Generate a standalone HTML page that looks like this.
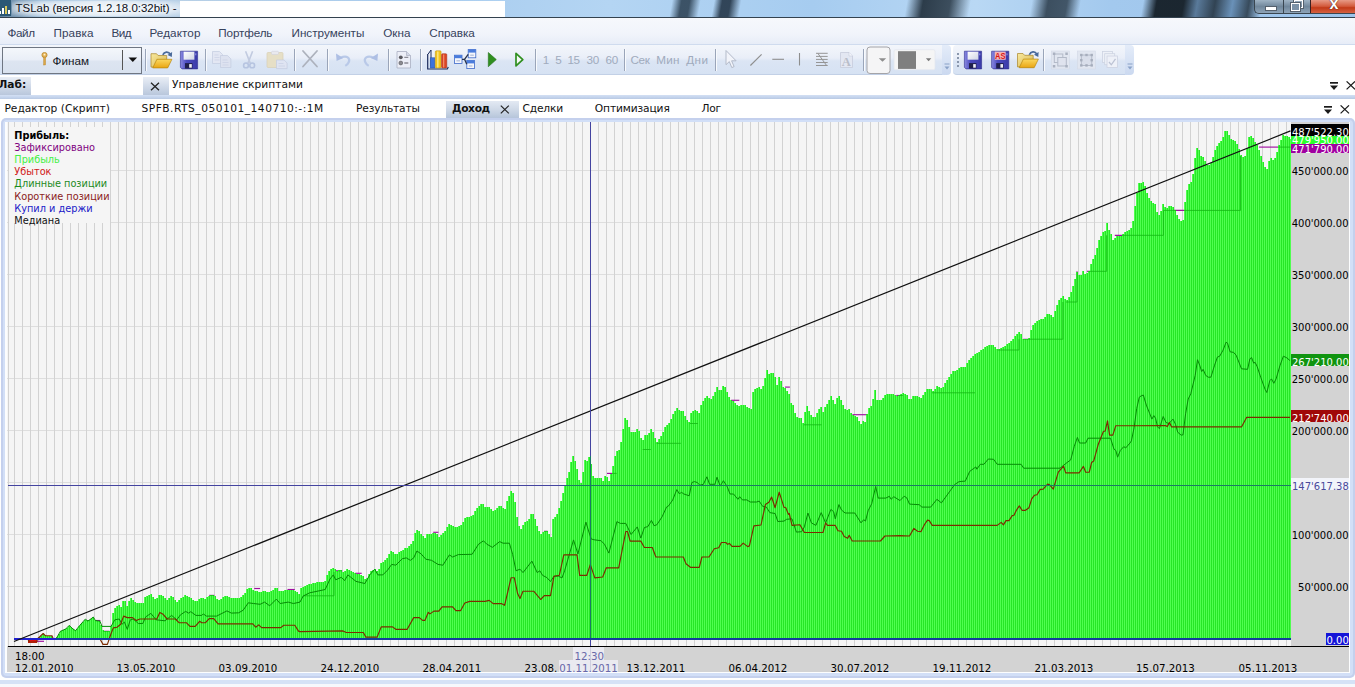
<!DOCTYPE html><html><head><meta charset="utf-8"><title>TSLab</title><style>
html,body{margin:0;padding:0}
body{width:1355px;height:687px;overflow:hidden;position:relative;background:#fff;font-family:"Liberation Sans",sans-serif;}
.abs{position:absolute;white-space:nowrap}
.ui{font-family:"Liberation Sans",sans-serif;font-size:11.7px;color:#36425c}
.tab{font-family:"DejaVu Sans",sans-serif;font-size:10.67px;color:#111;line-height:14px}
.ax{font-family:"DejaVu Sans",sans-serif;font-size:10px;color:#000;line-height:12px}
.lg{font-family:"DejaVu Sans",sans-serif;font-size:9.75px;line-height:12px}
.tag{font-family:"DejaVu Sans",sans-serif;font-size:10px;color:#fff;line-height:18px;height:12px;overflow:hidden;left:1291px;width:58px;text-align:left;padding-left:1px;box-sizing:border-box}
.dis{color:#a0abbd}
.sep{position:absolute;top:48.5px;width:1px;height:22.5px;background:#9aa5b9;box-shadow:1px 0 0 #f8fafd}
</style></head><body>
<div class="abs" id="titlebar" style="left:0;top:0;width:1355px;height:18px;background:
linear-gradient(100deg, rgba(0,0,0,0) 0, rgba(0,0,0,0) 49.5%, rgba(40,60,78,.85) 50.2%, rgba(40,60,78,.85) 50.8%, rgba(0,0,0,0) 51.6%, rgba(0,0,0,0) 52.6%, rgba(36,54,72,.9) 53.2%, rgba(36,54,72,.9) 53.8%, rgba(0,0,0,0) 54.6%,
 rgba(0,0,0,0) 66.8%, rgba(30,44,56,.9) 68%, rgba(30,44,56,.8) 70%, rgba(0,0,0,0) 71.5%,
 rgba(0,0,0,0) 76%, rgba(40,56,70,.85) 77.2%, rgba(40,56,70,.8) 78.6%, rgba(0,0,0,0) 79.6%,
 rgba(0,0,0,0) 84.2%, rgba(20,30,38,.95) 85.2%, rgba(20,30,38,.95) 87.2%, rgba(60,90,120,.7) 88.2%, rgba(30,44,56,.85) 89.5%, rgba(70,110,150,.6) 90.8%, rgba(30,44,56,.8) 92%, rgba(0,0,0,0) 93%),
linear-gradient(90deg,#5d7f9c 0,#a9c6df 3%,#c9dced 8%,#b6cfe6 14%,#a7cbee 30%,#b4d5f3 45%,#a6ccf0 60%,#b9d8f4 72%,#a3c9ee 82%,#9cc3ea 100%);"></div>
<div class="abs" style="left:0;top:17.4px;width:1355px;height:1.1px;background:#33424f"></div>
<div class="abs" style="left:0;top:0;width:10.7px;height:15.5px;background:#2b5875"></div>
<div class="abs" style="left:0px;top:11px;width:1.1px;height:2.7px;background:#fff"></div><div class="abs" style="left:2.2px;top:8.1px;width:1.8px;height:5.6px;background:#fff"></div><div class="abs" style="left:4.8px;top:5.9px;width:2.6px;height:7.8px;background:#d9c95a"></div><div class="abs" style="left:8.1px;top:10px;width:1.9px;height:3.7px;background:#fff"></div>
<div class="abs" style="left:12px;top:1px;width:172px;height:15px;background:radial-gradient(ellipse at center, rgba(255,255,255,.75) 0, rgba(255,255,255,.55) 60%, rgba(255,255,255,0) 100%)"></div>
<div class="abs" id="t_title" style="left:15.6px;top:1px;font-size:11.45px;line-height:14px;color:#0b0f18;text-shadow:0 0 4px #fff,0 0 6px #fff">TSLab (версия 1.2.18.0:32bit) -</div>
<div class="abs" style="left:180px;top:1px;width:325px;height:16px;background:#fff"></div>
<div class="abs" style="left:1254px;top:0;width:101px;height:14px;border:1px solid #3a4650;border-top:none;border-right:none;border-radius:0 0 0 5px;box-sizing:border-box;overflow:hidden;background:linear-gradient(#9fb3c4,#71879b 50%,#8ea4b8)">
<div class="abs" style="left:28px;top:0;width:1px;height:14px;background:#3a4650"></div>
<div class="abs" style="left:55px;top:0;width:46px;height:14px;border-left:1px solid #3a2020;background:linear-gradient(#e79a86 0,#d35a3c 45%,#c23a18 55%,#d9694a 100%)"></div>
<div class="abs" style="left:10px;top:6px;width:10px;height:3px;background:#fff;border:1px solid #55606c;box-sizing:content-box"></div>
<div class="abs" style="left:39px;top:0px;width:7px;height:6px;border:1.5px solid #fff;outline:1px solid #55606c"></div>
<div class="abs" style="left:36px;top:3px;width:7px;height:6px;border:1.5px solid #fff;outline:1px solid #55606c;background:#7d93a8"></div>
<div class="abs" style="left:74.5px;top:-5px;font:bold 16px 'Liberation Sans',sans-serif;color:#fff;text-shadow:0 0 1px #502018,0 0 1px #502018">x</div>
</div>
<div class="abs" style="left:0;top:18px;width:1355px;height:27px;background:linear-gradient(#f6f8fc 0,#f1f4fb 60%,#e6ecf7 100%)"></div>
<div class="abs" style="left:0;top:44px;width:1355px;height:1.5px;background:#cfdbee"></div>
<div class="abs ui" style="letter-spacing:-0.36px;left:7.4px;top:25.8px;line-height:14px">Файл</div>
<div class="abs ui" style="letter-spacing:0.09px;left:53.5px;top:25.8px;line-height:14px">Правка</div>
<div class="abs ui" style="letter-spacing:-0.55px;left:111.5px;top:25.8px;line-height:14px">Вид</div>
<div class="abs ui" style="letter-spacing:0.09px;left:149.5px;top:25.8px;line-height:14px">Редактор</div>
<div class="abs ui" style="letter-spacing:-0.14px;left:218.3px;top:25.8px;line-height:14px">Портфель</div>
<div class="abs ui" style="letter-spacing:0.00px;left:291.5px;top:25.8px;line-height:14px">Инструменты</div>
<div class="abs ui" style="letter-spacing:0.03px;left:383.2px;top:25.8px;line-height:14px">Окна</div>
<div class="abs ui" style="letter-spacing:-0.07px;left:429.3px;top:25.8px;line-height:14px">Справка</div>
<div class="abs" style="left:0;top:45px;width:1355px;height:31px;background:#fff"></div>
<div class="abs" style="left:0;top:45px;width:942px;height:30px;background:linear-gradient(#f3f6fb 0,#e9eef8 45%,#dbe5f4 55%,#d6e2f3 100%);border-bottom:1px solid #c2d0e6;box-sizing:border-box"></div>
<div class="abs" style="left:942px;top:45px;width:9px;height:30px;background:linear-gradient(#e4ecf9,#cbd9f0);border-radius:0 4px 4px 0"></div>
<div class="abs" style="left:953px;top:45px;width:172px;height:30px;background:linear-gradient(#f3f6fb 0,#e9eef8 45%,#dbe5f4 55%,#d6e2f3 100%);border-radius:4px 0 0 4px;border-bottom:1px solid #c2d0e6;box-sizing:border-box"></div>
<div class="abs" style="left:1125px;top:45px;width:9px;height:30px;background:linear-gradient(#e4ecf9,#cbd9f0);border-radius:0 4px 4px 0"></div>
<svg class="abs" style="left:943.5px;top:63px" width="6" height="8" viewBox="0 0 6 8"><rect x="0.5" y="0.5" width="5" height="1" fill="#8aa2c8"/><path d="M0.5 3.5h5l-2.5 3z" fill="#8aa2c8"/></svg>
<svg class="abs" style="left:1126.5px;top:63px" width="6" height="8" viewBox="0 0 6 8"><rect x="0.5" y="0.5" width="5" height="1" fill="#8aa2c8"/><path d="M0.5 3.5h5l-2.5 3z" fill="#8aa2c8"/></svg>
<div class="abs" style="left:957px;top:53.2px;width:2px;height:2px;background:#8a97ad"></div>
<div class="abs" style="left:957px;top:57.25px;width:2px;height:2px;background:#8a97ad"></div>
<div class="abs" style="left:957px;top:61.300000000000004px;width:2px;height:2px;background:#8a97ad"></div>
<div class="abs" style="left:957px;top:65.35px;width:2px;height:2px;background:#8a97ad"></div>
<div class="abs" style="left:2px;top:46.5px;width:140px;height:27.5px;box-sizing:border-box;border:1px solid #6f7682;background:linear-gradient(#f4f7fb 0,#e9eef7 48%,#dde5f1 52%,#d9e2ef 100%)"></div>
<div class="abs" style="left:122px;top:50px;width:1px;height:20px;background:#555"></div>
<svg class="abs" style="left:127.5px;top:57px" width="10" height="6" viewBox="0 0 10 6"><path d="M0.5 0.5h8.6L4.8 5z" fill="#111"/></svg>
<svg class="abs" style="left:41px;top:52px" width="7" height="14" viewBox="0 0 7 14"><circle cx="3.5" cy="3" r="2.6" fill="#e8b860" stroke="#b8862c" stroke-width="0.8"/><rect x="2.6" y="5" width="2" height="8" fill="#d9a648" stroke="#b8862c" stroke-width="0.4"/><circle cx="3.5" cy="2.6" r="0.9" fill="#fff3d0"/></svg>
<div class="abs ui" style="letter-spacing:-0.00px;left:52.6px;top:53.5px;line-height:14px;color:#15181f">Финам</div>
<div class="sep" style="left:144.5px"></div>
<div class="sep" style="left:205px"></div>
<div class="sep" style="left:293.5px"></div>
<div class="sep" style="left:326.5px"></div>
<div class="sep" style="left:387.5px"></div>
<div class="sep" style="left:420px"></div>
<div class="sep" style="left:535px"></div>
<div class="sep" style="left:623.5px"></div>
<div class="sep" style="left:714.5px"></div>
<div class="sep" style="left:862.5px"></div>
<div class="sep" style="left:1043px"></div>
<div class="abs ui dis" style="letter-spacing:-0.60px;left:542.7px;top:53px;line-height:14px">1</div>
<div class="abs ui dis" style="letter-spacing:-0.60px;left:555.3px;top:53px;line-height:14px">5</div>
<div class="abs ui dis" style="letter-spacing:-0.51px;left:567.6px;top:53px;line-height:14px">15</div>
<div class="abs ui dis" style="letter-spacing:-0.31px;left:586.6px;top:53px;line-height:14px">30</div>
<div class="abs ui dis" style="letter-spacing:-0.26px;left:605.5px;top:53px;line-height:14px">60</div>
<div class="abs ui dis" style="letter-spacing:-0.35px;left:630.4px;top:53px;line-height:14px">Сек</div>
<div class="abs ui dis" style="letter-spacing:0.23px;left:656.2px;top:53px;line-height:14px">Мин</div>
<div class="abs ui dis" style="letter-spacing:0.40px;left:686.3px;top:53px;line-height:14px">Дни</div>
<svg class="abs" style="left:0;top:45px" width="1355" height="31" viewBox="0 45 1355 31">
<defs>
<linearGradient id="gFold" x1="0" y1="0" x2="0" y2="1"><stop offset="0" stop-color="#fbd860"/><stop offset="1" stop-color="#e9a512"/></linearGradient>
<linearGradient id="gBack" x1="0" y1="0" x2="1" y2="1"><stop offset="0" stop-color="#f8e9a0"/><stop offset="1" stop-color="#d9b64a"/></linearGradient>
<linearGradient id="gFlop" x1="0" y1="0" x2="1" y2="0"><stop offset="0" stop-color="#8a8ae0"/><stop offset="0.35" stop-color="#4c4cc0"/><stop offset="1" stop-color="#3a3aa8"/></linearGradient>
<linearGradient id="gLab" x1="0" y1="0" x2="1" y2="1"><stop offset="0" stop-color="#ffffff"/><stop offset="1" stop-color="#cfd4e4"/></linearGradient>
</defs>
<g transform="translate(150.5,50.5)">
<path d="M0.5 3.2h5.5l1.6 1.8h8.6v11.6h-15.7z" fill="url(#gBack)" stroke="#a9852a" stroke-width="0.7"/>
<path d="M2.2 17.4l4.2-8.6h15l-4.2 8.6z" fill="url(#gFold)" stroke="#b8860e" stroke-width="0.7"/>
<path d="M12.3 4.4c1.4-3.4 5.6-4 7.6-0.6" fill="none" stroke="#4a6a9a" stroke-width="1.7"/>
<path d="M21.6 1.6l-0.3 5-4.3-2.2z" fill="#4a6a9a"/>
</g>
<g transform="translate(180,50.8)">
<path d="M0.4 0.4h17.2v17.7h-15.6l-1.6-1.6z" fill="url(#gFlop)" stroke="#2c2c8c" stroke-width="0.6"/>
<rect x="3.6" y="0.9" width="10.8" height="8" fill="url(#gLab)"/>
<rect x="5" y="12.3" width="7.4" height="5.4" fill="#20204c"/>
<rect x="9.2" y="13.3" width="2.6" height="3.6" fill="#f0f0f8"/>
<rect x="15.3" y="2.5" width="1" height="2" fill="#9a9ae8"/>
</g>
<g transform="translate(212,51)" fill="#e3e7f3" stroke="#c3cbe0" stroke-width="0.7">
<path d="M0.5 0.5h7l3 3v9h-10z"/><path d="M8.5 4.5h7l3.4 3.4v8.6h-10.4z" fill="#dde2f0"/>
<path d="M2.5 4h4M2.5 6.5h5M2.5 9h5M10.5 9h5M10.5 11.500h6M10.5 14h6" stroke="#c9d0e4" fill="none"/></g>
<g transform="translate(243,50.8)" fill="none" stroke="#b6c4e0" stroke-width="1.6">
<path d="M2.6 0.5l4.6 11.8M9.6 0.5l-4.6 11.8" stroke="#c2cbe0"/><circle cx="3" cy="14.6" r="2.4"/><circle cx="9.2" cy="14.6" r="2.4"/></g>
<g transform="translate(266.5,51)">
<rect x="0.5" y="1.5" width="16" height="15" rx="1" fill="#e6dfc6" stroke="#d8d0b4" stroke-width="0.7"/>
<rect x="5" y="0.3" width="7" height="3.2" rx="1" fill="#e9e9ee" stroke="#d0d2dc" stroke-width="0.6"/>
<path d="M10 9h7.6l3 3v5.6h-10.6z" fill="#dfe4f2" stroke="#c3cbe0" stroke-width="0.7"/>
<path d="M12 12.5h5M12 15h6.5" stroke="#c9d0e4" stroke-width="0.8"/></g>
<path d="M303 51l14 15.5M317 51l-14 15.5" stroke="#adb2bd" stroke-width="1.8" fill="none" stroke-linecap="round"/>
<g fill="none" stroke="#b9c9e8" stroke-width="2.2">
<path d="M340.5 57.8c6.500-3.200 10 0.500 8.200 4.500c-0.700 1.600-1.900 2.800-3.400 3.600"/>
<path d="M373.500 57.8c-6.500-3.200-10 0.500-8.200 4.500c0.700 1.600 1.900 2.800 3.400 3.600"/></g>
<path d="M336 53.5l0.600 7.600 6.600-3.200z" fill="#aebfe4"/><path d="M378 53.500l-0.600 7.600-6.600-3.200z" fill="#aebfe4"/>
<g transform="translate(396.500,51)">
<path d="M0.500 0.500h9.500l4 4v12.500h-13.500z" fill="#eceef7" stroke="#a9afc2" stroke-width="0.8"/>
<path d="M10 0.500v4h4" fill="#d4d8e6" stroke="#a9afc2" stroke-width="0.7"/>
<circle cx="4.300" cy="6.300" r="1.900" fill="#5a5a60"/><circle cx="4.300" cy="12" r="1.900" fill="#8a8a90" stroke="#5a5a60" stroke-width="0.6"/>
<path d="M7.800 6.300h4M7.800 12h4" stroke="#8c8c96" stroke-width="1.300"/></g>
<g transform="translate(427,49.500)">
<path d="M1.200 4.500l2.800-4v16.500" fill="none" stroke="#1c2c5c" stroke-width="1"/>
<path d="M0.700 4.500v15h19.600l1-2" fill="none" stroke="#1c2c5c" stroke-width="1.200"/>
<rect x="3.200" y="8.300" width="4.600" height="10.200" fill="#3c72dc" stroke="#2450a8" stroke-width="0.500"/>
<rect x="8.300" y="1.300" width="5.800" height="17.200" rx="1" fill="#f2c41c" stroke="#b88c10" stroke-width="0.500"/>
<rect x="10" y="2" width="1.600" height="16" fill="#fbe27a"/>
<rect x="14.600" y="4.200" width="5.200" height="14.300" rx="1" fill="#dc4424" stroke="#a02c14" stroke-width="0.500"/>
<rect x="16" y="5" width="1.300" height="13" fill="#f08868"/></g>
<g><rect x="454.4" y="55.2" width="7.600" height="8.200" fill="#f4f6fc" stroke="#3c68c8" stroke-width="0.800"/><rect x="454.4" y="55.2" width="7.600" height="3" fill="#4a7cdc"/><rect x="456.4" y="60.2" width="3.600" height="1.200" fill="#b0bcd8"/><rect x="468.2" y="49.6" width="7.600" height="8.200" fill="#f4f6fc" stroke="#3c68c8" stroke-width="0.800"/><rect x="468.2" y="49.6" width="7.600" height="3" fill="#4a7cdc"/><rect x="470.2" y="54.6" width="3.600" height="1.200" fill="#b0bcd8"/><rect x="466.8" y="60.4" width="7.600" height="8.200" fill="#f4f6fc" stroke="#3c68c8" stroke-width="0.800"/><rect x="466.8" y="60.4" width="7.600" height="3" fill="#4a7cdc"/><rect x="468.8" y="65.4" width="3.600" height="1.200" fill="#b0bcd8"/><path d="M462 59.300h2.500M464.500 59.300l3.700-5M464.500 59.300l2.300 5" stroke="#26324c" stroke-width="1.300" fill="none"/></g>
<path d="M488.300 52.500l8 7.100-8 7.100z" fill="#2f8f1f" stroke="#23701a" stroke-width="0.600"/>
<path d="M516 53.300l6.800 6.300-6.800 6.300z" fill="#f4f8f4" stroke="#2f8f1f" stroke-width="1.700" stroke-linejoin="round"/>
<path d="M726 50.500v14.200l3.300-3.100 2.500 6 2.300-1-2.500-5.800h4.500z" fill="#f2f4fa" stroke="#b3bac9" stroke-width="1"/>
<path d="M750.400 65.500l11.200-11.200" stroke="#8e8e8e" stroke-width="1.100"/>
<path d="M772.300 59.300h11.700" stroke="#8e8e8e" stroke-width="1.100"/>
<path d="M799.500 53v12.500" stroke="#8e8e8e" stroke-width="1.100"/>
<path d="M816 53.300h11.700M816 56.400h11.700M816 59.400h11.700M816 62.500h11.700M816 65.500h11.700M817.800 53.300l8.800 12.200" stroke="#959595" stroke-width="1" fill="none"/>
<g transform="translate(840,52)"><path d="M0.500 0.500h8.500l3.500 3.500v11.500h-12z" fill="#e3e7f2" stroke="#c6ccdc" stroke-width="0.800"/><path d="M9 0.500v3.500h3.500" fill="#f4f6fb" stroke="#c6ccdc" stroke-width="0.600"/>
<text x="6.200" y="13.500" font-family="Liberation Serif, serif" font-weight="bold" font-size="12.500" fill="#b9bdc9" text-anchor="middle">A</text></g>
<rect x="867" y="47" width="23" height="26.500" rx="3" fill="#f5f5f6" stroke="#a4a4a8" stroke-width="1"/>
<path d="M878.800 58.200h7.400l-3.700 3.600z" fill="#8e8e8e"/>
<rect x="894" y="49.700" width="41" height="20" rx="1.500" fill="#f5f5f5" stroke="#e3e7ef" stroke-width="0.800"/>
<rect x="898" y="51.200" width="18" height="17.700" fill="#7f7f7f"/>
<path d="M925.900 58.200h5.400l-2.700 3z" fill="#7a7a7a"/>
<g transform="translate(964,50.8)">
<path d="M0.4 0.4h17.2v17.7h-15.6l-1.6-1.6z" fill="url(#gFlop)" stroke="#2c2c8c" stroke-width="0.6"/>
<rect x="3.6" y="0.9" width="10.8" height="8" fill="url(#gLab)"/>
<rect x="5" y="12.3" width="7.4" height="5.4" fill="#20204c"/>
<rect x="9.2" y="13.3" width="2.6" height="3.6" fill="#f0f0f8"/>
<rect x="15.3" y="2.5" width="1" height="2" fill="#9a9ae8"/>
</g>
<g transform="translate(991.2,50.8)">
<path d="M0.4 0.4h17.2v17.7h-15.6l-1.6-1.6z" fill="url(#gFlop)" stroke="#2c2c8c" stroke-width="0.6"/>
<rect x="3.6" y="0.9" width="10.8" height="8" fill="#fff"/><rect x="3.6" y="0.9" width="10.8" height="8" fill="#e02828" opacity="0.35"/><text x="9" y="8.3" font-family="Liberation Sans, sans-serif" font-weight="bold" font-size="9.5" fill="#d81818" text-anchor="middle" textLength="10.5" lengthAdjust="spacingAndGlyphs">AS</text>
<rect x="5" y="12.3" width="7.4" height="5.4" fill="#20204c"/>
<rect x="9.2" y="13.3" width="2.6" height="3.6" fill="#f0f0f8"/>
<rect x="15.3" y="2.5" width="1" height="2" fill="#9a9ae8"/>
</g>
<g transform="translate(1017,50.3)">
<path d="M0.5 3.2h5.5l1.6 1.8h8.6v11.6h-15.7z" fill="url(#gBack)" stroke="#a9852a" stroke-width="0.7"/>
<path d="M2.2 17.4l4.2-8.6h15l-4.2 8.6z" fill="url(#gFold)" stroke="#b8860e" stroke-width="0.7"/>
<path d="M12.3 4.4c1.4-3.4 5.6-4 7.6-0.6" fill="none" stroke="#4a6a9a" stroke-width="1.7"/>
<path d="M21.6 1.6l-0.3 5-4.3-2.2z" fill="#4a6a9a"/>
</g>
<g transform="translate(1051.3,51)"><rect x="0" y="0" width="18" height="18" fill="#e1e6f0" stroke="#d3d9e6" stroke-width="0.600"/><rect x="3" y="3" width="8.500" height="8.500" fill="none" stroke="#b3bac8" stroke-width="1"/><rect x="6.500" y="6.500" width="8.500" height="8.500" fill="#dfe3ee" stroke="#b3bac8" stroke-width="1"/><rect x="1.5" y="1.5" width="2.500" height="2.500" fill="#aab1c0"/><rect x="14" y="1.5" width="2.500" height="2.500" fill="#aab1c0"/><rect x="1.5" y="14" width="2.500" height="2.500" fill="#aab1c0"/><rect x="14" y="14" width="2.500" height="2.500" fill="#aab1c0"/></g>
<g transform="translate(1077.3,51)"><rect x="0" y="0" width="18" height="18" fill="#e1e6f0" stroke="#d3d9e6" stroke-width="0.600"/><rect x="4" y="4" width="10.500" height="10.500" fill="#d9deea" stroke="#b3bac8" stroke-width="1"/><rect x="2.8" y="2.8" width="2.400" height="2.400" fill="#a6adbc"/><rect x="8" y="2.8" width="2.400" height="2.400" fill="#a6adbc"/><rect x="13.2" y="2.8" width="2.400" height="2.400" fill="#a6adbc"/><rect x="2.8" y="8" width="2.400" height="2.400" fill="#a6adbc"/><rect x="13.2" y="8" width="2.400" height="2.400" fill="#a6adbc"/><rect x="2.8" y="13.2" width="2.400" height="2.400" fill="#a6adbc"/><rect x="8" y="13.2" width="2.400" height="2.400" fill="#a6adbc"/><rect x="13.2" y="13.2" width="2.400" height="2.400" fill="#a6adbc"/></g>
<g transform="translate(1102.500,51.500)" fill="#eef1f8" stroke="#cdd3e2" stroke-width="0.800"><rect x="0" y="0" width="10" height="11"/><rect x="2.200" y="2.200" width="10" height="11"/><rect x="4.500" y="4.500" width="10.500" height="11.500"/><path d="M6.500 10.500l2.300 2.800 4.200-6" fill="none" stroke="#bcc3d4" stroke-width="1.300"/></g>
</svg>
<div class="abs" style="left:0;top:76px;width:1355px;height:19px;background:#fff"></div>
<div class="abs" style="left:0;top:77px;width:31px;height:18px;background:linear-gradient(#e9eef6,#b9c7dc)"></div>
<div class="abs tab" style="left:-1.6px;top:78px;font-weight:bold">Лаб:</div>
<div class="abs" style="left:143px;top:77px;width:26px;height:18px;background:linear-gradient(#e9eef6,#b9c7dc)"></div>
<svg class="abs" style="left:150px;top:82px" width="10" height="9" viewBox="0 0 10 9"><path d="M1 0.8l8 7.4M9 0.8l-8 7.4" stroke="#222" stroke-width="1.3" fill="none"/></svg>
<div class="abs tab" style="letter-spacing:0.00px;left:172px;top:78.3px">Управление скриптами</div>
<svg class="abs" style="left:1330px;top:82px" width="9" height="9" viewBox="0 0 9 9"><rect x="0" y="0" width="8" height="1.7" fill="#1a1a1a"/><path d="M0 3.6h8l-4 4.4z" fill="#1a1a1a"/></svg><svg class="abs" style="left:1346px;top:81px" width="10" height="9" viewBox="0 0 10 9"><path d="M0.6 0.4l8.4 8M9 0.4l-8.4 8" stroke="#1a1a1a" stroke-width="1.25" fill="none"/></svg>
<div class="abs" style="left:0;top:94.5px;width:1355px;height:4.5px;background:linear-gradient(#d3e0f4,#c3d3ec 60%,#b9c9e3)"></div>
<div class="abs" style="left:0;top:99px;width:1355px;height:19px;background:#fff"></div>
<div class="abs" style="left:445.5px;top:101px;width:73px;height:17px;background:linear-gradient(#e3e9f3,#cfd9e7 50%,#b6c5da)"></div>
<div class="abs tab" style="letter-spacing:0.02px;left:4.4px;top:102.1px;">Редактор (Скрипт)</div>
<div class="abs tab" style="letter-spacing:0.49px;left:141.5px;top:102.1px;">SPFB.RTS_050101_140710:-:1M</div>
<div class="abs tab" style="letter-spacing:-0.17px;left:356px;top:102.1px;">Результаты</div>
<div class="abs tab" style="letter-spacing:-0.35px;left:452px;top:102.1px;font-weight:bold;">Доход</div>
<div class="abs tab" style="letter-spacing:-0.16px;left:522.4px;top:102.1px;">Сделки</div>
<div class="abs tab" style="letter-spacing:-0.12px;left:594.8px;top:102.1px;">Оптимизация</div>
<div class="abs tab" style="letter-spacing:-0.25px;left:701.4px;top:102.1px;">Лог</div>
<svg class="abs" style="left:499.5px;top:105px" width="10" height="9" viewBox="0 0 10 9"><path d="M0.8 0.6l8 7.8M8.8 0.6l-8 7.8" stroke="#222" stroke-width="1.2" fill="none"/></svg>
<svg class="abs" style="left:1324px;top:106px" width="9" height="9" viewBox="0 0 9 9"><rect x="0" y="0" width="8" height="1.7" fill="#1a1a1a"/><path d="M0 3.6h8l-4 4.4z" fill="#1a1a1a"/></svg><svg class="abs" style="left:1340px;top:104.5px" width="10" height="9" viewBox="0 0 10 9"><path d="M0.6 0.4l8.4 8M9 0.4l-8.4 8" stroke="#1a1a1a" stroke-width="1.25" fill="none"/></svg>
<div class="abs" style="left:1px;top:118px;width:1354px;height:559.5px;background:#c4d0ed;border-radius:5px"></div>
<div class="abs" style="left:2.5px;top:119.5px;width:1350.5px;height:556.5px;background:#d2dff7;border-radius:4px"></div>
<div class="abs" style="left:5.3px;top:122px;width:1344.7px;height:551.3px;background:#fcfdfe"></div>
<div class="abs" style="left:7px;top:122px;width:1342px;height:549.6px;background:#d3d3d3"></div>
<div class="abs" style="left:0;top:680px;width:1355px;height:3.5px;background:#d5e2f6"></div>
<div class="abs" style="left:0;top:683.5px;width:1355px;height:3.5px;background:#f6f8fc"></div>
<svg id="chart" width="1355" height="687" viewBox="0 0 1355 687" style="position:absolute;left:0;top:0">
<defs>
<pattern id="bars" x="0" y="0" width="2" height="8" patternUnits="userSpaceOnUse"><rect x="0" y="0" width="1" height="8" fill="#50ff50"/><rect x="1" y="0" width="1" height="8" fill="#27e627"/></pattern>
<pattern id="vgrid" x="6" y="0" width="8" height="8" patternUnits="userSpaceOnUse"><rect x="0" y="0" width="1" height="8" fill="#d2d2d2"/></pattern>
<clipPath id="plotclip"><rect x="8" y="122" width="1283" height="524"/></clipPath>
<clipPath id="greenclip"><path d="M14 639V639H16V639H18V639H20V639H22V639H24V639H26V639H28V639H30V639H32V639H34V639H36V639H38V637H40V636H42V634H44V635H46V636H48V636H50V636H52V638H54V639H56V637H58V634H60V631H62V630H64V629H66V628H68V626H70V627H72V629H74V630H76V629H78V626H80V624H82V622H84V620H86V620H88V620H90V619H92V617H94V620H96V621H98V621H100V625H102V630H104V631H106V631H108V631H110V626H112V613H114V608H116V606H118V605H120V607H122V601H124V601H126V606H128V601H130V598H132V600H134V602H136V603H138V603H140V603H142V603H144V597H146V596H148V595H150V594H152V597H154V599H156V598H158V595H160V595H162V596H164V598H166V600H168V598H170V596H172V597H174V600H176V602H178V600H180V598H182V597H184V595H186V596H188V597H190V598H192V600H194V601H196V601H198V599H200V598H202V598H204V599H206V597H208V596H210V595H212V595H214V596H216V599H218V600H220V599H222V597H224V596H226V596H228V597H230V598H232V598H234V598H236V598H238V598H240V597H242V595H244V593H246V589H248V588H250V588H252V590H254V591H256V591H258V592H260V592H262V591H264V591H266V592H268V592H270V591H272V590H274V588H276V588H278V591H280V591H282V591H284V590H286V590H288V590H290V590H292V590H294V591H296V592H298V594H300V588H302V587H304V586H306V585H308V584H310V584H312V583H314V583H316V582H318V582H320V582H322V582H324V581H326V575H328V571H330V569H332V568H334V569H336V571H338V570H340V570H342V572H344V571H346V569H348V570H350V571H352V572H354V573H356V574H358V574H360V575H362V576H364V579H366V578H368V574H370V571H372V570H374V569H376V571H378V569H380V563H382V562H384V560H386V558H388V554H390V551H392V552H394V554H396V554H398V552H400V551H402V550H404V548H406V548H408V546H410V544H412V541H414V533H416V530H418V531H420V534H422V536H424V538H426V534H428V534H430V534H432V533H434V533H436V534H438V537H440V535H442V533H444V531H446V527H448V524H450V525H452V526H454V527H456V527H458V526H460V525H462V522H464V518H466V517H468V517H470V516H472V515H474V511H476V508H478V506H480V504H482V504H484V507H486V507H488V507H490V509H492V511H494V510H496V508H498V506H500V506H502V508H504V509H506V501H508V496H510V491H512V493H514V502H516V517H518V526H520V529H522V525H524V522H526V521H528V519H530V514H532V514H534V519H536V526H538V531H540V534H542V532H544V531H546V531H548V534H550V537H552V519H554V517H556V514H558V508H560V501H562V493H564V485H566V478H568V472H570V462H572V456H574V461H576V469H578V480H580V483H582V472H584V460H586V461H588V457H590V464H592V476H594V478H596V478H598V478H600V478H602V481H604V476H606V477H608V481H610V474H612V466H614V456H616V451H618V450H620V442H622V429H624V418H626V420H628V427H630V432H632V432H634V432H636V429H638V431H640V438H642V440H644V435H646V435H648V433H650V429H652V432H654V438H656V442H658V439H660V436H662V432H664V427H666V425H668V423H670V419H672V414H674V411H676V408H678V410H680V411H682V411H684V416H686V420H688V422H690V413H692V411H694V410H696V411H698V413H700V405H702V401H704V398H706V396H708V398H710V399H712V396H714V392H716V387H718V390H720V390H722V386H724V387H726V392H728V397H730V400H732V401H734V403H736V405H738V406H740V405H742V405H744V405H746V407H748V408H750V409H752V392H754V389H756V388H758V387H760V389H762V386H764V378H766V370H768V374H770V373H772V373H774V377H776V385H778V377H780V381H782V387H784V388H786V391H788V394H790V403H792V405H794V413H796V417H798V418H800V418H802V423H804V412H806V406H808V411H810V415H812V417H814V417H816V413H818V409H820V407H822V412H824V407H826V404H828V400H830V396H832V400H834V404H836V398H838V396H840V400H842V405H844V409H846V410H848V409H850V413H852V415H854V416H856V417H858V421H860V424H862V421H864V422H866V414H868V408H870V406H872V399H874V390H876V400H878V400H880V400H882V398H884V395H886V394H888V394H890V394H892V394H894V395H896V396H898V395H900V394H902V393H904V394H906V395H908V399H910V399H912V396H914V396H916V396H918V397H920V398H922V395H924V392H926V389H928V389H930V389H932V391H934V389H936V386H938V387H940V388H942V387H944V383H946V380H948V377H950V374H952V371H954V371H956V370H958V368H960V367H962V367H964V367H966V363H968V360H970V358H972V356H974V354H976V353H978V352H980V350H982V349H984V347H986V346H988V345H990V345H992V345H994V347H996V349H998V349H1000V348H1002V347H1004V346H1006V344H1008V343H1010V341H1012V339H1014V336H1016V334H1018V332H1020V334H1022V339H1024V339H1026V339H1028V338H1030V330H1032V325H1034V323H1036V321H1038V320H1040V319H1042V319H1044V317H1046V314H1048V314H1050V315H1052V317H1054V311H1056V305H1058V300H1060V298H1062V296H1064V299H1066V300H1068V297H1070V292H1072V286H1074V279H1076V272H1078V275H1080V275H1082V271H1084V274H1086V273H1088V271H1090V264H1092V259H1094V255H1096V248H1098V240H1100V236H1102V232H1104V231H1106V223H1108V230H1110V234H1112V240H1114V238H1116V236H1118V236H1120V236H1122V234H1124V232H1126V231H1128V230H1130V228H1132V221H1134V206H1136V193H1138V183H1140V183H1142V182H1144V186H1146V193H1148V198H1150V201H1152V203H1154V204H1156V212H1158V215H1160V211H1162V204H1164V207H1166V208H1168V206H1170V206H1172V207H1174V210H1176V215H1178V219H1180V221H1182V220H1184V202H1186V190H1188V184H1190V182H1192V174H1194V158H1196V148H1198V150H1200V156H1202V157H1204V161H1206V165H1208V165H1210V163H1212V157H1214V150H1216V146H1218V143H1220V141H1222V137H1224V131H1226V131H1228V135H1230V139H1232V140H1234V141H1236V144H1238V149H1240V155H1242V157H1244V156H1246V148H1248V137H1250V136H1252V138H1254V142H1256V145H1258V150H1260V156H1262V162H1264V167H1266V169H1268V161H1270V158H1272V160H1274V158H1276V152H1278V145H1280V140H1282V135H1284V136H1286V136H1288V137H1290V139H1292V639Z"/></clipPath>
</defs>
<rect x="7" y="122" width="1284" height="524" fill="#f5f5f5"/>
<rect x="7" y="586" width="1284" height="1" fill="#dedede"/>
<rect x="7" y="534" width="1284" height="1" fill="#dedede"/>
<rect x="7" y="482" width="1284" height="1" fill="#dedede"/>
<rect x="7" y="430" width="1284" height="1" fill="#dedede"/>
<rect x="7" y="378" width="1284" height="1" fill="#dedede"/>
<rect x="7" y="326" width="1284" height="1" fill="#dedede"/>
<rect x="7" y="274" width="1284" height="1" fill="#dedede"/>
<rect x="7" y="222" width="1284" height="1" fill="#dedede"/>
<rect x="7" y="170" width="1284" height="1" fill="#dedede"/>
<rect x="7" y="122" width="1284" height="524" fill="url(#vgrid)"/>
<rect x="8" y="122" width="1" height="524" fill="#d2d2d2"/>
<g clip-path="url(#plotclip)">
<rect x="28" y="640" width="9" height="3" fill="#e01010"/>
<g stroke="#a010a0" stroke-width="1.15" opacity="1" fill="none"><line x1="36.9" y1="641.3" x2="44" y2="641.3"/><line x1="95.9" y1="620.5" x2="100.4" y2="620.5"/><line x1="103" y1="631.3" x2="109.5" y2="631.3"/><line x1="209.2" y1="595.4" x2="214.4" y2="595.4"/><line x1="254.2" y1="588.5" x2="260.1" y2="588.5"/><line x1="287.5" y1="589.5" x2="294.8" y2="589.5"/><line x1="303" y1="595.8" x2="334" y2="595.8"/><line x1="335.7" y1="570.8" x2="342.2" y2="570.8"/><line x1="355.2" y1="573.3" x2="361.7" y2="573.3"/><line x1="433.2" y1="532.3" x2="438.4" y2="532.3"/><line x1="543.9" y1="531.3" x2="547.6" y2="531.3"/><line x1="607" y1="473.4" x2="616.7" y2="473.4"/><line x1="642.7" y1="449.5" x2="650.8" y2="449.5"/><line x1="656.5" y1="443.3" x2="680.8" y2="443.3"/><line x1="689.8" y1="423.5" x2="697.9" y2="423.5"/><line x1="731.2" y1="400.3" x2="739.3" y2="400.3"/><line x1="785" y1="387.1" x2="789.9" y2="387.1"/><line x1="803.7" y1="424.8" x2="821.6" y2="424.8"/><line x1="852.4" y1="414.7" x2="867" y2="414.7"/><line x1="896.3" y1="395.5" x2="902.7" y2="395.5"/><line x1="932" y1="392.8" x2="975" y2="392.8"/><line x1="997.7" y1="350" x2="1019" y2="350"/><line x1="1023.2" y1="339.2" x2="1062.9" y2="339.2"/><line x1="1066" y1="302" x2="1077" y2="302"/><line x1="1087" y1="271.3" x2="1106.7" y2="271.3"/><line x1="1114.8" y1="235.3" x2="1163.4" y2="235.3"/><line x1="1163.4" y1="210.4" x2="1240.5" y2="210.4"/><line x1="1259" y1="147.1" x2="1290.5" y2="147.1"/><line x1="334" y1="595.8" x2="334" y2="572"/><line x1="1163.4" y1="235.3" x2="1163.4" y2="210.4"/><line x1="1240.5" y1="210.4" x2="1240.5" y2="156"/><line x1="1062.9" y1="339.2" x2="1062.9" y2="302"/><line x1="1106.7" y1="271.3" x2="1106.7" y2="235.3"/><line x1="1019" y1="350" x2="1019" y2="339.2"/><line x1="1077" y1="302" x2="1077" y2="271.3"/></g>
<path d="M14 639V639H16V639H18V639H20V639H22V639H24V639H26V639H28V639H30V639H32V639H34V639H36V639H38V637H40V636H42V634H44V635H46V636H48V636H50V636H52V638H54V639H56V637H58V634H60V631H62V630H64V629H66V628H68V626H70V627H72V629H74V630H76V629H78V626H80V624H82V622H84V620H86V620H88V620H90V619H92V617H94V620H96V621H98V621H100V625H102V630H104V631H106V631H108V631H110V626H112V613H114V608H116V606H118V605H120V607H122V601H124V601H126V606H128V601H130V598H132V600H134V602H136V603H138V603H140V603H142V603H144V597H146V596H148V595H150V594H152V597H154V599H156V598H158V595H160V595H162V596H164V598H166V600H168V598H170V596H172V597H174V600H176V602H178V600H180V598H182V597H184V595H186V596H188V597H190V598H192V600H194V601H196V601H198V599H200V598H202V598H204V599H206V597H208V596H210V595H212V595H214V596H216V599H218V600H220V599H222V597H224V596H226V596H228V597H230V598H232V598H234V598H236V598H238V598H240V597H242V595H244V593H246V589H248V588H250V588H252V590H254V591H256V591H258V592H260V592H262V591H264V591H266V592H268V592H270V591H272V590H274V588H276V588H278V591H280V591H282V591H284V590H286V590H288V590H290V590H292V590H294V591H296V592H298V594H300V588H302V587H304V586H306V585H308V584H310V584H312V583H314V583H316V582H318V582H320V582H322V582H324V581H326V575H328V571H330V569H332V568H334V569H336V571H338V570H340V570H342V572H344V571H346V569H348V570H350V571H352V572H354V573H356V574H358V574H360V575H362V576H364V579H366V578H368V574H370V571H372V570H374V569H376V571H378V569H380V563H382V562H384V560H386V558H388V554H390V551H392V552H394V554H396V554H398V552H400V551H402V550H404V548H406V548H408V546H410V544H412V541H414V533H416V530H418V531H420V534H422V536H424V538H426V534H428V534H430V534H432V533H434V533H436V534H438V537H440V535H442V533H444V531H446V527H448V524H450V525H452V526H454V527H456V527H458V526H460V525H462V522H464V518H466V517H468V517H470V516H472V515H474V511H476V508H478V506H480V504H482V504H484V507H486V507H488V507H490V509H492V511H494V510H496V508H498V506H500V506H502V508H504V509H506V501H508V496H510V491H512V493H514V502H516V517H518V526H520V529H522V525H524V522H526V521H528V519H530V514H532V514H534V519H536V526H538V531H540V534H542V532H544V531H546V531H548V534H550V537H552V519H554V517H556V514H558V508H560V501H562V493H564V485H566V478H568V472H570V462H572V456H574V461H576V469H578V480H580V483H582V472H584V460H586V461H588V457H590V464H592V476H594V478H596V478H598V478H600V478H602V481H604V476H606V477H608V481H610V474H612V466H614V456H616V451H618V450H620V442H622V429H624V418H626V420H628V427H630V432H632V432H634V432H636V429H638V431H640V438H642V440H644V435H646V435H648V433H650V429H652V432H654V438H656V442H658V439H660V436H662V432H664V427H666V425H668V423H670V419H672V414H674V411H676V408H678V410H680V411H682V411H684V416H686V420H688V422H690V413H692V411H694V410H696V411H698V413H700V405H702V401H704V398H706V396H708V398H710V399H712V396H714V392H716V387H718V390H720V390H722V386H724V387H726V392H728V397H730V400H732V401H734V403H736V405H738V406H740V405H742V405H744V405H746V407H748V408H750V409H752V392H754V389H756V388H758V387H760V389H762V386H764V378H766V370H768V374H770V373H772V373H774V377H776V385H778V377H780V381H782V387H784V388H786V391H788V394H790V403H792V405H794V413H796V417H798V418H800V418H802V423H804V412H806V406H808V411H810V415H812V417H814V417H816V413H818V409H820V407H822V412H824V407H826V404H828V400H830V396H832V400H834V404H836V398H838V396H840V400H842V405H844V409H846V410H848V409H850V413H852V415H854V416H856V417H858V421H860V424H862V421H864V422H866V414H868V408H870V406H872V399H874V390H876V400H878V400H880V400H882V398H884V395H886V394H888V394H890V394H892V394H894V395H896V396H898V395H900V394H902V393H904V394H906V395H908V399H910V399H912V396H914V396H916V396H918V397H920V398H922V395H924V392H926V389H928V389H930V389H932V391H934V389H936V386H938V387H940V388H942V387H944V383H946V380H948V377H950V374H952V371H954V371H956V370H958V368H960V367H962V367H964V367H966V363H968V360H970V358H972V356H974V354H976V353H978V352H980V350H982V349H984V347H986V346H988V345H990V345H992V345H994V347H996V349H998V349H1000V348H1002V347H1004V346H1006V344H1008V343H1010V341H1012V339H1014V336H1016V334H1018V332H1020V334H1022V339H1024V339H1026V339H1028V338H1030V330H1032V325H1034V323H1036V321H1038V320H1040V319H1042V319H1044V317H1046V314H1048V314H1050V315H1052V317H1054V311H1056V305H1058V300H1060V298H1062V296H1064V299H1066V300H1068V297H1070V292H1072V286H1074V279H1076V272H1078V275H1080V275H1082V271H1084V274H1086V273H1088V271H1090V264H1092V259H1094V255H1096V248H1098V240H1100V236H1102V232H1104V231H1106V223H1108V230H1110V234H1112V240H1114V238H1116V236H1118V236H1120V236H1122V234H1124V232H1126V231H1128V230H1130V228H1132V221H1134V206H1136V193H1138V183H1140V183H1142V182H1144V186H1146V193H1148V198H1150V201H1152V203H1154V204H1156V212H1158V215H1160V211H1162V204H1164V207H1166V208H1168V206H1170V206H1172V207H1174V210H1176V215H1178V219H1180V221H1182V220H1184V202H1186V190H1188V184H1190V182H1192V174H1194V158H1196V148H1198V150H1200V156H1202V157H1204V161H1206V165H1208V165H1210V163H1212V157H1214V150H1216V146H1218V143H1220V141H1222V137H1224V131H1226V131H1228V135H1230V139H1232V140H1234V141H1236V144H1238V149H1240V155H1242V157H1244V156H1246V148H1248V137H1250V136H1252V138H1254V142H1256V145H1258V150H1260V156H1262V162H1264V167H1266V169H1268V161H1270V158H1272V160H1274V158H1276V152H1278V145H1280V140H1282V135H1284V136H1286V136H1288V137H1290V139H1292V639Z" fill="url(#bars)"/>
<g clip-path="url(#greenclip)"><g stroke="#14b814" stroke-width="1.0" opacity="0.8" fill="none"><line x1="36.9" y1="641.3" x2="44" y2="641.3"/><line x1="95.9" y1="620.5" x2="100.4" y2="620.5"/><line x1="103" y1="631.3" x2="109.5" y2="631.3"/><line x1="209.2" y1="595.4" x2="214.4" y2="595.4"/><line x1="254.2" y1="588.5" x2="260.1" y2="588.5"/><line x1="287.5" y1="589.5" x2="294.8" y2="589.5"/><line x1="303" y1="595.8" x2="334" y2="595.8"/><line x1="335.7" y1="570.8" x2="342.2" y2="570.8"/><line x1="355.2" y1="573.3" x2="361.7" y2="573.3"/><line x1="433.2" y1="532.3" x2="438.4" y2="532.3"/><line x1="543.9" y1="531.3" x2="547.6" y2="531.3"/><line x1="607" y1="473.4" x2="616.7" y2="473.4"/><line x1="642.7" y1="449.5" x2="650.8" y2="449.5"/><line x1="656.5" y1="443.3" x2="680.8" y2="443.3"/><line x1="689.8" y1="423.5" x2="697.9" y2="423.5"/><line x1="731.2" y1="400.3" x2="739.3" y2="400.3"/><line x1="785" y1="387.1" x2="789.9" y2="387.1"/><line x1="803.7" y1="424.8" x2="821.6" y2="424.8"/><line x1="852.4" y1="414.7" x2="867" y2="414.7"/><line x1="896.3" y1="395.5" x2="902.7" y2="395.5"/><line x1="932" y1="392.8" x2="975" y2="392.8"/><line x1="997.7" y1="350" x2="1019" y2="350"/><line x1="1023.2" y1="339.2" x2="1062.9" y2="339.2"/><line x1="1066" y1="302" x2="1077" y2="302"/><line x1="1087" y1="271.3" x2="1106.7" y2="271.3"/><line x1="1114.8" y1="235.3" x2="1163.4" y2="235.3"/><line x1="1163.4" y1="210.4" x2="1240.5" y2="210.4"/><line x1="1259" y1="147.1" x2="1290.5" y2="147.1"/><line x1="334" y1="595.8" x2="334" y2="572"/><line x1="1163.4" y1="235.3" x2="1163.4" y2="210.4"/><line x1="1240.5" y1="210.4" x2="1240.5" y2="156"/><line x1="1062.9" y1="339.2" x2="1062.9" y2="302"/><line x1="1106.7" y1="271.3" x2="1106.7" y2="235.3"/><line x1="1019" y1="350" x2="1019" y2="339.2"/><line x1="1077" y1="302" x2="1077" y2="271.3"/></g></g>
<polyline points="56.0,639.0 60.4,631.3 65.7,629.0 69.3,625.3 72.0,628.2 75.5,630.7 79.0,626.4 85.3,619.1 87.9,621.1 93.3,617.1 95.5,620.6 99.9,621.1 102.0,626.4 111.0,626.4 114.8,619.8 119.2,619.0 122.1,624.2 124.4,622.0 127.3,629.4 130.3,619.8 133.2,619.0 138.4,623.5 142.8,623.5 145.8,616.8 150.9,613.4 156.1,619.8 165.0,620.8 171.6,615.4 176.8,619.8 180.4,614.9 185.6,611.4 188.6,613.1 190.8,611.7 195.9,615.4 201.8,615.4 203.3,613.9 206.3,616.1 216.6,616.1 226.9,610.9 231.4,613.1 238.7,612.8 243.2,610.2 248.3,602.8 253.5,603.5 260.1,604.3 264.6,602.1 269.7,605.8 276.4,599.1 280.1,603.5 288.2,602.1 293.4,603.5 300.0,602.1 303.2,596.0 309.7,592.8 317.9,591.1 325.2,589.5 330.0,579.0 333.3,574.9 335.7,579.8 341.4,577.3 344.6,580.6 347.9,574.9 356.0,581.4 364.9,583.5 369.8,574.9 374.7,569.2 377.9,574.9 382.8,574.9 387.7,570.0 391.7,564.4 395.8,565.2 402.3,558.7 406.3,557.9 410.4,560.3 413.7,557.9 416.9,551.0 421.0,553.8 425.8,559.2 431.5,560.3 438.0,564.4 442.9,565.2 449.4,554.9 452.6,557.0 458.3,554.6 472.1,554.3 478.6,544.1 483.5,540.8 486.7,544.1 492.4,547.3 499.7,541.6 503.0,543.2 509.4,543.2 512.7,554.6 516.0,570.8 520.0,569.2 523.0,572.6 531.9,561.1 537.2,572.6 539.9,570.8 542.5,575.3 546.9,577.6 550.5,581.5 554.0,576.2 558.4,576.2 562.0,577.9 564.6,570.8 573.5,539.9 577.9,554.0 585.9,522.1 588.6,531.0 591.2,539.0 594.8,539.9 601.0,540.7 604.5,544.3 608.9,553.1 616.9,521.6 620.4,523.4 625.8,523.4 631.1,534.5 637.3,526.9 640.8,538.1 644.4,527.5 647.9,526.6 651.4,520.4 654.1,525.7 656.8,524.8 662.1,516.8 666.5,507.1 668.3,506.2 672.7,500.0 676.8,489.6 679.5,494.0 681.3,492.2 683.9,494.0 689.2,495.8 691.9,482.5 694.5,481.6 697.2,482.5 699.9,485.2 703.4,484.3 706.9,476.8 709.6,484.3 714.9,484.3 717.0,477.2 720.2,486.1 723.4,480.7 727.3,486.9 730.0,494.0 733.5,494.0 737.9,499.3 739.7,496.7 742.4,499.9 746.8,499.9 750.3,502.0 756.5,502.0 759.2,501.1 762.7,506.4 766.3,507.0 769.8,512.6 775.1,513.5 777.8,521.5 784.0,521.1 786.6,519.3 792.0,518.8 796.4,532.1 801.7,531.7 804.4,526.8 807.9,513.0 811.4,522.9 815.9,525.4 821.2,512.6 825.6,522.9 830.9,509.4 833.6,511.7 835.3,518.8 838.9,504.6 841.5,510.0 845.1,513.0 854.8,513.0 861.0,522.9 863.7,519.7 865.5,521.1 868.1,510.8 871.7,503.8 875.7,486.4 878.2,498.1 885.8,498.1 889.4,496.3 891.1,499.3 893.8,496.7 900.0,500.6 904.2,496.2 906.8,497.9 909.5,504.1 919.2,504.7 921.9,507.1 930.7,507.1 936.9,499.3 941.4,502.9 950.2,490.8 954.6,484.6 959.1,481.6 965.3,481.1 969.7,471.4 975.9,466.9 976.8,469.2 980.3,464.3 983.9,464.3 988.3,459.0 993.6,459.3 997.2,464.3 1021.1,464.3 1023.7,468.2 1060.0,468.2 1067.1,462.5 1070.7,459.9 1074.2,446.6 1077.4,437.4 1079.5,443.0 1085.7,443.0 1088.0,438.2 1110.5,438.2 1114.0,449.2 1115.8,450.5 1117.6,457.2 1120.3,450.5 1123.8,446.6 1125.6,448.0 1130.0,443.0 1131.4,440.9 1134.1,427.8 1136.7,408.6 1139.3,397.2 1141.0,396.0 1143.3,395.0 1146.3,405.1 1149.8,413.8 1151.9,419.1 1153.8,415.6 1155.5,418.2 1157.6,426.9 1159.4,428.7 1163.2,416.5 1166.0,422.6 1169.0,423.4 1173.0,419.1 1175.5,424.3 1177.7,432.2 1181.2,435.2 1183.0,434.8 1185.6,413.8 1188.2,399.0 1190.8,393.8 1195.2,375.4 1197.5,359.7 1199.9,365.8 1201.7,371.6 1203.1,369.3 1205.7,375.4 1208.3,377.2 1210.9,377.2 1214.4,365.8 1217.4,357.1 1219.7,356.2 1223.1,350.1 1226.1,342.2 1227.5,343.1 1230.1,351.8 1233.6,352.4 1236.2,355.3 1241.5,368.8 1247.6,369.3 1249.9,358.8 1251.6,357.6 1253.7,363.2 1255.1,362.3 1257.2,366.7 1260.7,377.2 1265.1,389.4 1266.8,392.5 1269.8,380.7 1271.5,378.9 1273.8,383.3 1276.1,378.9 1279.9,365.8 1283.4,356.2 1286.9,357.9 1290.0,360.6" fill="none" stroke="#078a07" stroke-width="1.0" stroke-linejoin="round"/>
<polyline points="14.0,639.0 28.0,639.0 29.0,642.0 36.9,642.0 37.3,639.0 43.2,633.5 45.3,635.7 52.0,635.7 53.3,639.0 100.0,639.0 103.0,644.4 107.4,644.4 111.0,633.8 113.3,627.9 117.0,627.2 120.7,624.2 123.6,616.1 127.3,617.6 132.5,617.6 136.2,620.5 139.9,619.0 156.8,619.0 159.8,612.4 162.7,613.9 167.2,619.0 175.3,619.0 179.0,622.7 186.3,622.7 190.0,626.4 195.2,626.4 199.6,621.3 201.8,622.7 205.5,622.7 209.2,618.6 213.7,618.6 218.1,623.8 252.8,623.8 255.7,627.2 258.7,624.9 261.6,627.6 280.8,627.6 283.8,625.2 294.8,625.2 298.5,631.1 300.0,631.6 343.0,630.9 346.3,632.5 363.3,632.5 365.8,637.1 377.1,637.1 381.2,626.9 392.5,626.9 395.8,629.3 407.2,629.3 413.7,617.6 419.3,617.6 422.6,620.4 425.0,620.4 428.3,612.3 429.9,613.9 434.0,611.1 438.8,611.1 442.1,606.9 452.6,606.9 455.9,610.6 460.7,610.6 464.8,603.0 469.7,601.4 485.1,601.4 489.2,600.4 493.2,603.6 501.3,603.6 504.6,605.3 511.1,577.7 514.3,577.7 517.6,593.6 520.0,598.5 523.0,591.2 533.7,591.2 540.7,599.5 544.3,595.6 550.5,595.6 554.0,576.2 559.3,575.3 563.8,554.9 577.0,554.9 579.7,575.3 586.8,575.3 590.3,564.6 594.8,577.9 602.7,577.0 606.3,567.8 618.7,567.8 625.8,531.5 627.5,531.5 630.2,541.1 640.8,541.1 644.4,547.5 652.3,547.5 655.9,557.0 683.3,557.0 686.0,563.8 690.4,567.3 699.3,567.3 701.9,557.0 709.0,557.0 714.3,548.7 718.7,547.8 721.4,542.5 725.8,542.5 727.6,544.3 729.4,543.4 732.0,546.4 740.0,546.4 743.2,543.1 747.7,546.6 749.4,545.9 753.9,525.9 761.0,525.0 765.4,504.6 768.9,502.3 771.6,497.0 775.1,507.7 779.2,492.2 784.0,507.3 785.8,507.7 788.4,514.4 789.3,513.5 792.0,525.4 799.9,524.7 804.4,532.5 823.0,532.5 825.6,522.9 827.4,525.4 835.3,525.4 838.0,530.7 841.5,531.2 844.2,536.5 847.7,538.3 849.2,535.3 852.2,541.0 880.5,541.0 884.9,536.0 900.0,535.6 909.5,536.0 913.9,528.4 917.5,531.2 921.0,531.6 924.5,524.5 927.5,520.1 929.3,520.6 932.2,525.4 997.2,525.4 1001.2,522.4 1003.4,524.9 1006.0,520.6 1009.0,520.6 1012.2,515.6 1014.0,515.3 1016.1,510.7 1019.3,505.9 1022.0,510.3 1025.5,510.3 1029.0,507.7 1031.7,498.8 1034.4,495.3 1037.0,494.7 1040.2,489.4 1043.2,489.1 1047.6,484.1 1049.4,484.6 1053.3,489.1 1058.3,472.2 1063.6,466.1 1065.7,472.8 1079.2,472.8 1083.4,466.4 1085.7,472.2 1089.3,472.2 1091.6,462.5 1093.7,461.1 1098.1,444.8 1103.4,431.5 1105.2,431.0 1107.5,420.9 1109.6,435.1 1112.8,435.1 1115.8,425.7 1130.0,425.7 1165.5,425.5 1167.2,426.6 1169.5,422.6 1171.6,426.9 1241.5,426.9 1246.7,417.3 1290.0,417.3" fill="none" stroke="#7c2c00" stroke-width="1.15" stroke-linejoin="round"/>
<rect x="14" y="638" width="1277" height="2" fill="#14409c"/>
<rect x="14" y="638" width="42" height="2" fill="#2020d0"/>
<line x1="14" y1="641.5" x2="1290.5" y2="130.9" stroke="#101010" stroke-width="1.25"/>
<rect x="8" y="485" width="558" height="1" fill="#4444a0"/><rect x="566" y="485" width="725" height="1" fill="#1a7a66"/>
<rect x="590" y="122" width="1" height="334" fill="#4444a0"/><rect x="590" y="456" width="1" height="182" fill="#1a7a66"/><rect x="590" y="640" width="1" height="6" fill="#4444a0"/>
</g>
<rect x="8" y="646" width="1341" height="1" fill="#000"/>
</svg>
<div class="abs ax" style="right:6.5px;top:582.4px">50'000.00</div>
<div class="abs ax" style="right:6.5px;top:530.3px">100'000.00</div>
<div class="abs ax" style="right:6.5px;top:478.2px">150'000.00</div>
<div class="abs ax" style="right:6.5px;top:426.1px">200'000.00</div>
<div class="abs ax" style="right:6.5px;top:373.9px">250'000.00</div>
<div class="abs ax" style="right:6.5px;top:321.8px">300'000.00</div>
<div class="abs ax" style="right:6.5px;top:269.7px">350'000.00</div>
<div class="abs ax" style="right:6.5px;top:217.6px">400'000.00</div>
<div class="abs ax" style="right:6.5px;top:165.5px">450'000.00</div>
<div class="abs tag" style="top:141.1px;background:#a000a0;color:#fff;">471'790.00</div>
<div class="abs tag" style="top:131.8px;background:#2cff2c;color:#fff;">479'950.00</div>
<div class="abs tag" style="top:123.9px;background:#000;color:#fff;">487'522.30</div>
<div class="abs tag" style="top:353.5px;background:#109410;color:#fff;">267'210.00</div>
<div class="abs tag" style="top:410.3px;background:#a00808;color:#fff;">212'740.00</div>
<div class="abs tag" style="top:478.2px;background:#f2f4fa;color:#4a4a9a;">147'617.38</div>
<div class="abs tag" style="top:633px;left:1325.5px;width:23.5px;line-height:16.5px;background:#1414d8;color:#fff">0.00</div>
<div class="abs ax" style="left:14.9px;top:661.6px;font-size:10.25px">12.01.2010</div>
<div class="abs ax" style="left:116.6px;top:661.6px;font-size:10.25px">13.05.2010</div>
<div class="abs ax" style="left:218.6px;top:661.6px;font-size:10.25px">03.09.2010</div>
<div class="abs ax" style="left:320.6px;top:661.6px;font-size:10.25px">24.12.2010</div>
<div class="abs ax" style="left:422.6px;top:661.6px;font-size:10.25px">28.04.2011</div>
<div class="abs ax" style="left:524.6px;top:661.6px;font-size:10.25px">23.08.</div>
<div class="abs ax" style="left:626.6px;top:661.6px;font-size:10.25px">13.12.2011</div>
<div class="abs ax" style="left:728.6px;top:661.6px;font-size:10.25px">06.04.2012</div>
<div class="abs ax" style="left:830.6px;top:661.6px;font-size:10.25px">30.07.2012</div>
<div class="abs ax" style="left:932.6px;top:661.6px;font-size:10.25px">19.11.2012</div>
<div class="abs ax" style="left:1034.6px;top:661.6px;font-size:10.25px">21.03.2013</div>
<div class="abs ax" style="left:1136.1px;top:661.6px;font-size:10.25px">15.07.2013</div>
<div class="abs ax" style="left:1238.6px;top:661.6px;font-size:10.25px">05.11.2013</div>
<div class="abs ax" style="left:14.9px;top:649.8px;font-size:10.25px">18:00</div>
<div class="abs" style="left:573px;top:647px;width:31px;height:12.5px;background:#eaeaf0"></div>
<div class="abs" style="left:558.5px;top:659.5px;width:59.2px;height:12px;background:#eaeaf0"></div>
<div class="abs" style="left:590px;top:647px;width:1px;height:24.5px;background:#cfcfe0"></div>
<div class="abs ax" style="left:574.4px;top:649.8px;font-size:10.25px;color:#6868a8">12:30</div>
<div class="abs ax" style="left:559.2px;top:661.6px;font-size:10.25px;color:#6868a8">01.11.2011</div>
<div class="abs" style="left:9px;top:126.5px;width:101px;height:96.5px;background:#f5f5f5"></div>
<div class="abs lg" style="left:14.3px;top:129.5px;color:#000;font-weight:bold;">Прибыль:</div>
<div class="abs lg" style="left:14.3px;top:141.7px;color:#800080;">Зафиксировано</div>
<div class="abs lg" style="left:14.3px;top:153.7px;color:#44f044;">Прибыль</div>
<div class="abs lg" style="left:14.3px;top:165.9px;color:#d01818;">Убыток</div>
<div class="abs lg" style="left:14.3px;top:178.3px;color:#1c8a1c;">Длинные позиции</div>
<div class="abs lg" style="left:14.3px;top:190.7px;color:#8b1c1c;">Короткие позиции</div>
<div class="abs lg" style="left:14.3px;top:202.7px;color:#2020c8;">Купил и держи</div>
<div class="abs lg" style="left:14.3px;top:214.9px;color:#111;">Медиана</div>
</body></html>
